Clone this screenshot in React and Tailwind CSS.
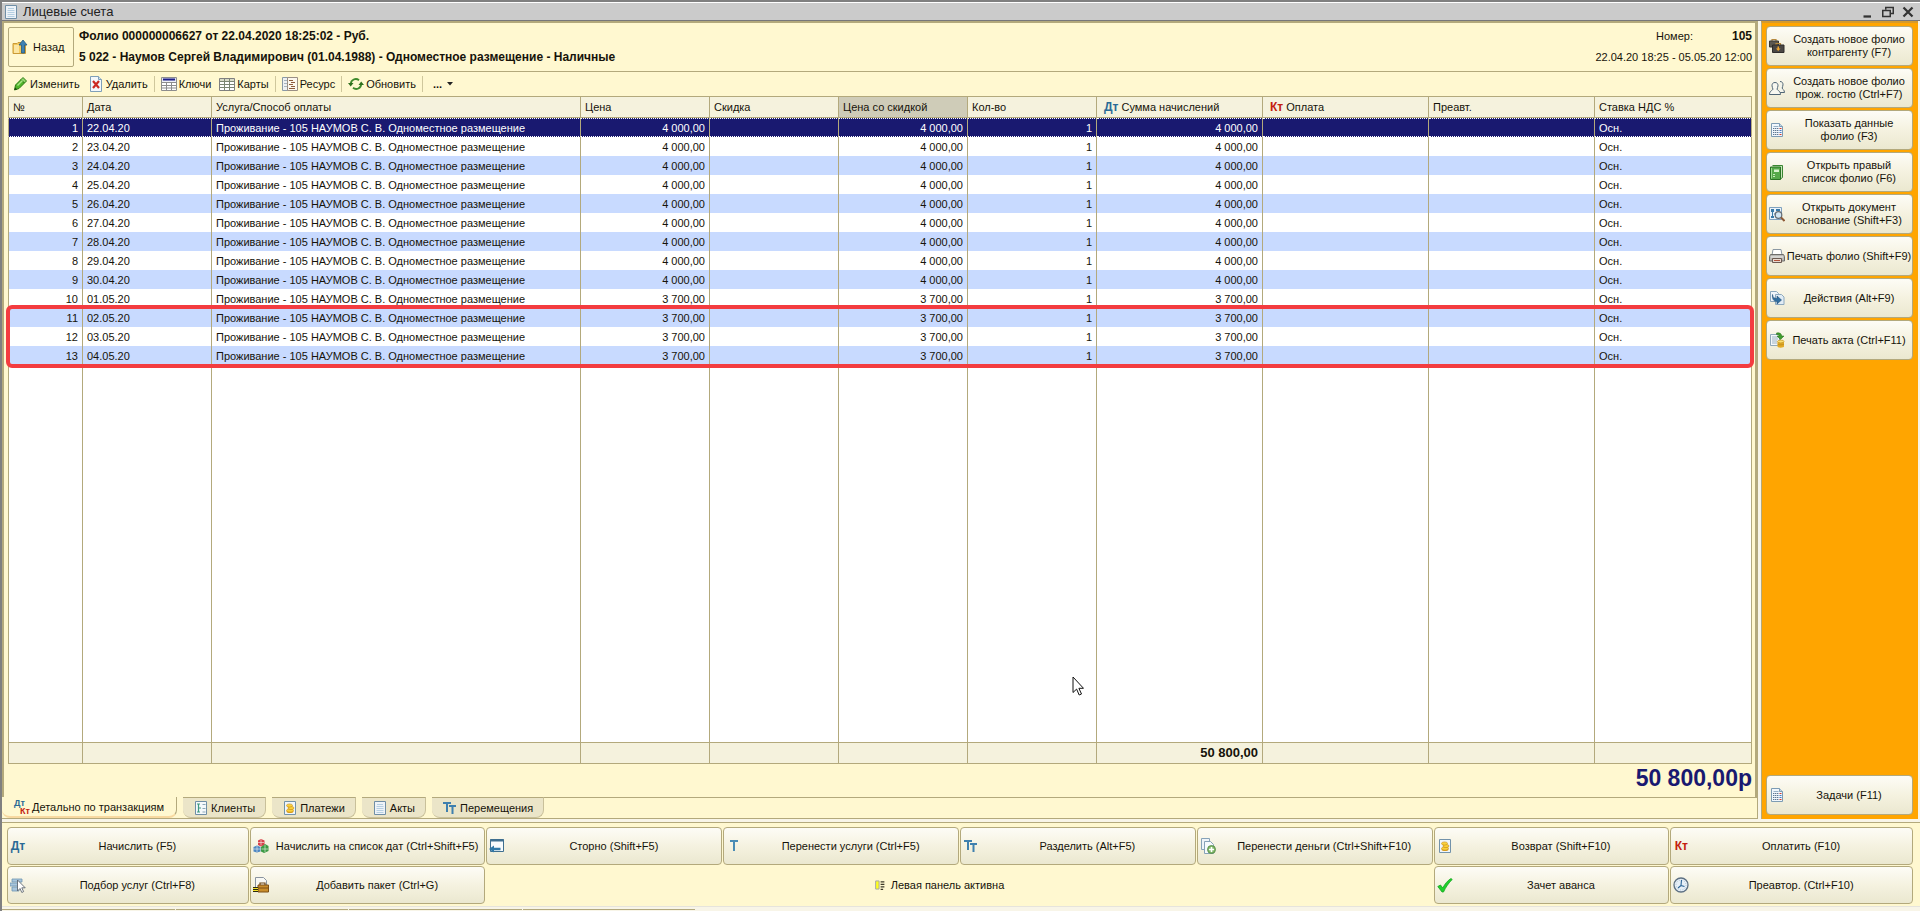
import React, { useState } from 'react';

/* ---------- icons ---------- */

const Icon = ({ children, className = 'w-4 h-4' }) => (
  <svg viewBox="0 0 16 16" className={`${className} shrink-0`} fill="none" aria-hidden="true">
    {children}
  </svg>
);

const SheetIcon = ({ className }) => (
  <Icon className={className}>
    <path d="M2.500 1.500h11v13h-11z" fill="#eef3f8" stroke="#6f8ea6" />
    <path d="M5 4.500h6M4.500 6.500h7M4.500 8.500h7M4.500 10.500h7M4.500 12.500h7" stroke="#b5cfe2" />
  </Icon>
);

const BackIcon = () => (
  <Icon>
    <path d="M1 4.500h4l1-1h3v2h4.500v9H1z" fill="#f3c95c" stroke="#c99a37" />
    <path d="M2 6h5v8H2z" fill="#fbe6a2" />
    <path d="M11 1l4 5h-2.500v8h-3V6H7z" fill="#3e82b4" stroke="#22587f" strokeWidth=".8" />
  </Icon>
);

const PencilIcon = () => (
  <Icon>
    <path d="M2.500 14l1-5L9 3.500l3.500 3.500L7 12.500z" fill="#4fb52b" stroke="#2a7a12" />
    <path d="M9 3.500l2-2L14.500 5l-2 2z" fill="#8fd66b" stroke="#2a7a12" />
    <path d="M5.500 9.500l5-5" stroke="#a9e588" strokeWidth="1.400" />
    <path d="M2.500 14l.6-2.500 2 2z" fill="#1e3d12" />
  </Icon>
);

const DeleteIcon = () => (
  <Icon>
    <path d="M2.500.5h8l3 3v12h-11z" fill="#f4f8fc" stroke="#7f9fb8" />
    <path d="M10.500.5v3h3" stroke="#7f9fb8" fill="#cfe0ee" />
    <path d="M5 5l6 7M11 5l-6 7" stroke="#cc2a22" strokeWidth="2.200" />
  </Icon>
);

const KeysIcon = () => (
  <Icon>
    <path d="M.5 1.500h15v13H.5z" fill="#fff" stroke="#8d8d8d" />
    <path d="M1 2h14v3.500H1z" fill="#dfe3ee" />
    <path d="M2 3.500h12" stroke="#20208a" strokeWidth="2" />
    <path d="M1 6.500h14M1 9.500h14M1 12h14M5.500 6v8.500M10.500 6v8.500" stroke="#8d8d8d" />
  </Icon>
);

const CardsIcon = () => (
  <Icon>
    <path d="M.5 2.500h15v12H.5z" fill="#fff" stroke="#808080" />
    <path d="M1 3h14v2H1z" fill="#d9dbc8" />
    <path d="M1 5.500h14M1 8.500h14M1 11.500h14M5.500 3v11.500M10.500 3v11.500" stroke="#7b8573" />
  </Icon>
);

const ResourceIcon = () => (
  <Icon>
    <path d="M.5 1.500h6v13h-6z" fill="#eef0f2" stroke="#8a99a6" />
    <path d="M2 4.500h3M2 7.500h3M2 10.500h3" stroke="#a8b4bf" />
    <path d="M5.500 1.500h10v13h-10z" fill="#fcf7ee" stroke="#9a8f85" />
    <path d="M7 4.500h4M9 6.500h4M7 8.500h4M9 10.500h4M7 12.500h6" stroke="#8d5a3c" />
  </Icon>
);

const RefreshIcon = () => (
  <Icon>
    <path d="M2.800 8A5 5 0 0 1 11 4.200M13.200 8A5 5 0 0 1 5 11.800" stroke="#3f8a2c" strokeWidth="1.800" />
    <path d="M0 7h5.500L2.700 10.500zM10.500 9H16l-2.800-3.500z" fill="#2f6f1f" />
  </Icon>
);

const ClientsIcon = () => (
  <Icon>
    <path d="M2.500 1.500h11v13h-11z" fill="#f4f8fb" stroke="#6f8ea6" />
    <path d="M4 4h3M5.500 4v8M5.500 8H8M4 12h3" stroke="#3f9a80" strokeWidth="1.200" />
    <path d="M9.500 4.500h3M9.500 8.500h3M9.500 12h3" stroke="#8ba7b8" />
  </Icon>
);

const MoneyIcon = () => (
  <Icon>
    <path d="M2.500 1.500h11v13h-11z" fill="#f0f6fb" stroke="#7292aa" />
    <path d="M4.600 10.500h6.800V12c-1 1.400-5.800 1.400-6.800 0z" fill="#d99c1c" />
    <ellipse cx="8" cy="10.500" rx="3.400" ry="1.700" fill="#f9d13c" stroke="#c98a14" strokeWidth=".6" />
    <ellipse cx="9" cy="8" rx="3" ry="1.600" fill="#f9d13c" stroke="#c98a14" strokeWidth=".6" />
    <ellipse cx="7.500" cy="5.500" rx="3" ry="1.600" fill="#f9d13c" stroke="#c98a14" strokeWidth=".6" />
  </Icon>
);

const BagsIcon = () => (
  <Icon>
    <path d="M3 3V1.500h4V3" stroke="#b5893e" strokeWidth="1.200" />
    <path d="M.5 3h9v6h-9z" fill="#5c5850" stroke="#393733" />
    <path d="M7 7V5.500h4.500V7" stroke="#b5893e" strokeWidth="1.200" />
    <path d="M3.500 7h11.500v7.500H3.500z" fill="#4a4744" stroke="#2e2c2a" />
    <path d="M8.500 8.500h1.500v2h1.500L9.200 13 7 10.500h1.500z" fill="#f0a52c" />
  </Icon>
);

const PeopleIcon = () => (
  <Icon>
    <path d="M11 1.500c2.200 0 3 1.400 3 3.300 0 1.500-.8 2.200-.8 3.200 0 1.400 2.300 1.500 2.300 4.500H11" stroke="#4f6575" fill="#f4f4ea" />
    <path d="M6 2.500c2.200 0 3 1.400 3 3.300 0 1.500-.9 2.200-.9 3.200 0 1.600 3.400 1.500 3.400 5.500H.5c0-4 3.400-3.900 3.400-5.500C3.900 8 3 7.300 3 5.800c0-1.900.8-3.300 3-3.300z" stroke="#4f6575" fill="#f8f8f0" />
  </Icon>
);

const DataSheetIcon = () => (
  <Icon>
    <path d="M2.500 1.500h8l3 3v10h-11z" fill="#f1f7fc" stroke="#7d9cb4" />
    <path d="M10.500 1.500v3h3" fill="#c4d8e8" stroke="#7d9cb4" />
    <path d="M4 6.500h6M4 8.500h6M4 10.500h6M4 12.500h6" stroke="#5f7890" strokeDasharray="1.400 .6" />
    <path d="M10.500 6.500h2M10.500 12.500h2" stroke="#d43a2a" />
    <path d="M10.500 8.500h2M10.500 10.500h2" stroke="#4a79c0" />
    <path d="M4.500 4.500h5" stroke="#9ab2c6" />
  </Icon>
);

const BookIcon = () => (
  <Icon>
    <path d="M3.500 1.500h10v12l-2 1.500" fill="#c9e8bc" stroke="#3a8532" />
    <path d="M1.500 3h10v12.500h-10z" fill="#56a94a" stroke="#2b7425" />
    <path d="M2.500 4v10.500" stroke="#a0dc92" />
    <path d="M5 5.500h5v2.500H5z" fill="#d9f3cf" />
    <path d="M4 10.500h2M4 12.500h2" stroke="#c9ecbd" />
  </Icon>
);

const FindDocIcon = () => (
  <Icon>
    <path d="M.5 1.500h12v12H.5z" fill="#eaf2f9" stroke="#7fa1bf" />
    <path d="M2 3h3v3H2zM7 3h4v2H7zM2 10h3v2H2z" fill="#3a7aa8" />
    <path d="M3.500 6v4M5 8h3" stroke="#3a7aa8" />
    <circle cx="9.500" cy="9" r="3.300" fill="#cfe4f3" fillOpacity=".9" stroke="#646b72" strokeWidth="1.200" />
    <path d="M12 11.500l3.500 3.500" stroke="#8e5a37" strokeWidth="2" />
  </Icon>
);

const PrinterIcon = () => (
  <Icon>
    <path d="M4 1.500h8l1 5.500H3z" fill="#fff" stroke="#8b98a3" />
    <path d="M1.500 6.500h13l1 2v4.500H.5V8.500z" fill="#b9b9b6" stroke="#6e6e6c" />
    <path d="M2 9h12" stroke="#f0f0ee" />
    <path d="M3.500 10.500h9v4h-9z" fill="#e9d9cf" stroke="#6b5b52" />
    <path d="M5 12.500h6" stroke="#b3543a" />
  </Icon>
);

const ActionsIcon = () => (
  <Icon>
    <path d="M1.500 1.500h6l2 2v8h-8z" fill="#eff5fa" stroke="#8ca8bd" />
    <path d="M6.500 4.500h6l2.500 2.500v7.500H6.500z" fill="#e1ecf5" stroke="#8ca8bd" />
    <path d="M3.500 4.500c.5 3 1.500 4 4.500 4V6l4.500 4-4.500 4v-2.500C4.500 11.500 3 9 3.500 4.500z" fill="#2f6ea0" stroke="#1f4f77" strokeWidth=".6" />
  </Icon>
);

const PrintActIcon = () => (
  <Icon>
    <path d="M1.500 2.500h9v11h-9z" fill="#f3f7fa" stroke="#90a8b8" />
    <path d="M3 5h6M3 7h6M3 9h5M3 11h5" stroke="#9db3c2" />
    <path d="M7.500 1c3-.6 5 .4 5.200 3H15l-3.500 3.500L8 4h2c0-1-.8-1.500-2.500-1.500z" fill="#3f9d2e" stroke="#256b19" strokeWidth=".5" />
    <path d="M8.500 9.500h6.500v5c0 1.500-6.500 1.500-6.500 0z" fill="#e2ab26" />
    <ellipse cx="11.700" cy="9.500" rx="3.300" ry="1.400" fill="#fbe071" stroke="#b98315" strokeWidth=".6" />
    <path d="M8.500 12c1 1.200 5.500 1.200 6.500 0" stroke="#b98315" strokeWidth=".7" />
  </Icon>
);

const CubesIcon = () => (
  <Icon>
    <path d="M5 2.500l3-1.500 3.500 1.500v4.500L8 8.500 5 7z" fill="#d8404a" />
    <path d="M.5 9L4 7.500 7.500 9v4.500L4 14.500l-3.500-1z" fill="#4c86c2" />
    <path d="M8 9l4-3 3.500 2v5L11 15l-3-1.500z" fill="#3c9a44" />
    <path d="M8 1.500v6M5 4.500h6M4 8v6M.5 11h7M12 7v7M8.500 11h6.500" stroke="#f3f3ee" strokeWidth=".6" />
  </Icon>
);

const StornoIcon = () => (
  <Icon>
    <path d="M1.500 1.500h13v12h-13z" fill="#f8fbfd" stroke="#3f6f90" />
    <path d="M1 2.500h14" stroke="#3f6f90" strokeWidth="2" />
    <path d="M0 11l5-3.500v2.200h6.500v2.600H5v2.200z" fill="#2f78a8" />
  </Icon>
);

const TransferIcon = () => (
  <Icon>
    <path d="M4 3h8M8 3v10" stroke="#4a8cb5" strokeWidth="2" />
  </Icon>
);

const DoubleTIcon = () => (
  <Icon>
    <path d="M1 3h8M5 3v9" stroke="#3f80ae" strokeWidth="2" />
    <path d="M7 6h7M10.500 6v8" stroke="#3f80ae" strokeWidth="2" />
  </Icon>
);

const MoveMoneyIcon = () => (
  <Icon>
    <path d="M1.500.5h8v11h-8z" fill="#eef4f9" stroke="#86a2b8" />
    <path d="M4.500 3.500h6l3 3v9h-9z" fill="#f6fafd" stroke="#86a2b8" />
    <circle cx="11.500" cy="11.500" r="4" fill="#7fb867" stroke="#4f8540" strokeWidth=".8" />
    <path d="M11.500 9v5M9 11.500h5" stroke="#fff" strokeWidth="1.600" />
  </Icon>
);

const PickIcon = () => (
  <Icon>
    <path d="M2 2h10v3H2zM0 6h9v3H0zM2 10h7v4H2z" fill="#a9c6dc" stroke="#6d94b2" strokeWidth=".8" />
    <path d="M7.500 3v11l2.500-2.500 1.800 4 1.800-.9-1.800-3.800h3.400z" fill="#fff" stroke="#5d6770" strokeWidth=".9" />
  </Icon>
);

const PackageIcon = () => (
  <Icon>
    <path d="M2.500.5h8l3 3v8h-11z" fill="#f8f8f4" stroke="#8a94a0" />
    <path d="M7 8V6h5v2" stroke="#6b4312" strokeWidth="1.200" />
    <path d="M5 8h10.500v7H5z" fill="#c98d2c" stroke="#7d4f14" />
    <path d="M5 11h10" stroke="#7d4f14" />
    <path d="M0 10.500h5M0 12.500h5M0 14.500h5" stroke="#2b2a10" />
    <path d="M0 11.500h5M0 13.500h5" stroke="#f4e02a" />
  </Icon>
);

const CheckIcon = () => (
  <Icon>
    <path d="M.8 9.500L3.500 8l2.300 3C7.500 7.500 10.500 3.500 14 1.500l1.200 1C12 5.500 8.500 10.500 6.500 15H5z" fill="#1fd02c" stroke="#14a51e" strokeWidth=".8" />
  </Icon>
);

const ClockIcon = () => (
  <Icon>
    <circle cx="8" cy="8" r="7" fill="#e6eff7" stroke="#5c6f82" strokeWidth="1.300" />
    <circle cx="8" cy="8" r="5" stroke="#a9bfd2" strokeWidth="1" strokeDasharray="1 1.600" />
    <path d="M8.500 3L8 8.500l3.500 1M8 8.500L5 11" stroke="#2b6496" strokeWidth="1.100" />
  </Icon>
);

const PanelIcon = () => (
  <Icon className="w-[10px] h-[10px]">
    <path d="M1 1.500h5.500v13H1z" fill="#ffff1c" stroke="#a9a9a9" strokeWidth="1.600" />
    <path d="M9 3h6M9 7h6M9 11h6M9 15h4" stroke="#3c3a28" strokeWidth="2" />
  </Icon>
);

const DebitMark = () => <span className="font-bold text-[12px] text-[#2a6a96]">Дт</span>;
const CreditMark = () => <span className="font-bold text-[12px] text-[#c4200e]">Кт</span>;

const DebitCreditIcon = () => (
  <span className="flex flex-col w-4 text-[9px] leading-2 font-bold shrink-0">
    <span className="text-[#2a6a96] self-start">Дт</span>
    <span className="text-[#c4200e] self-end">Кт</span>
  </span>
);

/* ---------- data ---------- */

const columns = [
  { title: '№', width: 'w-[75px]' },
  { title: 'Дата', width: 'w-[129px]' },
  { title: 'Услуга/Способ оплаты', width: 'w-[369px]' },
  { title: 'Цена', width: 'w-[129px]' },
  { title: 'Скидка', width: 'w-[129px]' },
  { title: 'Цена со скидкой', width: 'w-[129px]', active: true },
  { title: 'Кол-во', width: 'w-[129px]' },
  { title: 'Сумма начислений', width: 'w-[166px]', mark: <DebitMark /> },
  { title: 'Оплата', width: 'w-[166px]', mark: <CreditMark /> },
  { title: 'Преавт.', width: 'w-[166px]' },
  { title: 'Ставка НДС %', width: 'w-[157px]' },
];

const service = 'Проживание - 105 НАУМОВ С. В. Одноместное размещение';

const rows = [
  { id: 1, date: '22.04.20', price: '4 000,00' },
  { id: 2, date: '23.04.20', price: '4 000,00' },
  { id: 3, date: '24.04.20', price: '4 000,00' },
  { id: 4, date: '25.04.20', price: '4 000,00' },
  { id: 5, date: '26.04.20', price: '4 000,00' },
  { id: 6, date: '27.04.20', price: '4 000,00' },
  { id: 7, date: '28.04.20', price: '4 000,00' },
  { id: 8, date: '29.04.20', price: '4 000,00' },
  { id: 9, date: '30.04.20', price: '4 000,00' },
  { id: 10, date: '01.05.20', price: '3 700,00' },
  { id: 11, date: '02.05.20', price: '3 700,00' },
  { id: 12, date: '03.05.20', price: '3 700,00' },
  { id: 13, date: '04.05.20', price: '3 700,00' },
];

const toolbar = [
  [
    { label: 'Изменить', icon: <PencilIcon /> },
    { label: 'Удалить', icon: <DeleteIcon /> },
  ],
  [
    { label: 'Ключи', icon: <KeysIcon /> },
    { label: 'Карты', icon: <CardsIcon /> },
  ],
  [{ label: 'Ресурс', icon: <ResourceIcon /> }],
  [{ label: 'Обновить', icon: <RefreshIcon /> }],
];

const tabs = [
  { label: 'Детально по транзакциям', icon: <DebitCreditIcon /> },
  { label: 'Клиенты', icon: <ClientsIcon /> },
  { label: 'Платежи', icon: <MoneyIcon /> },
  { label: 'Акты', icon: <SheetIcon /> },
  { label: 'Перемещения', icon: <DoubleTIcon /> },
];

const sideActions = [
  { label: 'Создать новое фолио\nконтрагенту (F7)', icon: <BagsIcon /> },
  { label: 'Создать новое фолио\nпрож. гостю (Ctrl+F7)', icon: <PeopleIcon /> },
  { label: 'Показать данные\nфолио (F3)', icon: <DataSheetIcon /> },
  { label: 'Открыть правый\nсписок фолио (F6)', icon: <BookIcon /> },
  { label: 'Открыть документ\nоснование (Shift+F3)', icon: <FindDocIcon /> },
  { label: 'Печать фолио (Shift+F9)', icon: <PrinterIcon /> },
  { label: 'Действия (Alt+F9)', icon: <ActionsIcon /> },
  { label: 'Печать акта (Ctrl+F11)', icon: <PrintActIcon /> },
];

/* ---------- pieces ---------- */

const ActionButton = ({ icon, label, height = 'h-[38px]' }) => (
  <button
    type="button"
    className={`${height} w-full min-w-0 flex items-center gap-px pl-[2px] rounded border border-[#b3a97c] bg-linear-to-b from-[#fdfcf6] via-[#f5f2e0] to-[#ebe8d0] hover:to-[#f5f2dd]`}
  >
    <span className="w-4 shrink-0 flex items-center justify-center">{icon}</span>
    <span className="flex-1 text-center leading-[13px] whitespace-pre">{label}</span>
  </button>
);

const cell = 'border-r border-[#b3a97c] px-1 whitespace-nowrap overflow-hidden';

const FolioRow = ({ row, selected, onSelect, children }) => {
  const tone = selected
    ? 'bg-[#191970] text-white'
    : row.id % 2 === 1
      ? 'bg-[#c8daff]'
      : 'bg-white';
  const line = selected ? 'border-y border-y-white [border-block-style:dotted]' : '';
  return (
    <tr className={`h-[19px] ${tone}`} onClick={onSelect}>
      <td className={`border-r border-l border-[#b3a97c] px-1 text-right ${line}`}>
        {row.id}
        {children}
      </td>
      <td className={`${cell} ${line}`}>{row.date}</td>
      <td className={`${cell} ${line}`}>{service}</td>
      <td className={`${cell} ${line} text-right`}>{row.price}</td>
      <td className={`${cell} ${line}`}></td>
      <td className={`${cell} ${line} text-right`}>{row.price}</td>
      <td className={`${cell} ${line} text-right`}>1</td>
      <td className={`${cell} ${line} text-right`}>{row.price}</td>
      <td className={`${cell} ${line}`}></td>
      <td className={`${cell} ${line}`}></td>
      <td className={`${cell} ${line}`}>Осн.</td>
    </tr>
  );
};

const FolioTable = () => {
  const [selected, setSelected] = useState(1);

  return (
    <table className="w-full h-full table-fixed border-separate border-spacing-0 border-t border-[#b3a97c]">
      <thead>
        <tr className="h-[21px] bg-[#f5f2dd]">
          {columns.map((col, index) => (
            <th
              key={col.title}
              className={`${col.width} ${index === 0 ? 'border-l' : ''} ${col.active ? 'bg-[#cfccb8]' : ''} border-r border-b border-[#b3a97c] px-1 text-left font-normal whitespace-nowrap`}
            >
              {col.mark ? <span className="px-[3px]">{col.mark}</span> : null}
              {col.title}
            </th>
          ))}
        </tr>
      </thead>
      <tbody>
        {rows.slice(0, 10).map((row) => (
          <FolioRow key={row.id} row={row} selected={selected === row.id} onSelect={() => setSelected(row.id)} />
        ))}
      </tbody>
      {/* Последние три ночи обведены рамкой */}
      <tbody className="relative">
        {rows.slice(10).map((row, index) => (
          <FolioRow key={row.id} row={row} selected={selected === row.id} onSelect={() => setSelected(row.id)}>
            {index === 0 && (
              <span className="absolute -inset-x-[2px] -inset-y-[3px] border-4 border-[#f33c40] rounded-md pointer-events-none"></span>
            )}
          </FolioRow>
        ))}
      </tbody>
      <tbody className="h-full">
        <tr className="h-full bg-white">
          {columns.map((col, index) => (
            <td key={col.title} className={`${index === 0 ? 'border-l' : ''} border-r border-[#b3a97c]`}></td>
          ))}
        </tr>
      </tbody>
      <tfoot>
        <tr className="h-[22px] bg-[#f5f2dd]">
          {columns.map((col, index) => (
            <td
              key={col.title}
              className={`${index === 0 ? 'border-l' : ''} border-y border-r border-[#b3a97c] px-1 text-right text-[13px] font-bold`}
            >
              {index === 7 ? '50 800,00' : ''}
            </td>
          ))}
        </tr>
      </tfoot>
    </table>
  );
};

const TitleBar = () => (
  <header className="h-[19px] shrink-0 flex items-center pl-px pr-[6px] bg-[#cbcbcb] border-t border-b border-t-white border-b-[#77777a] text-[13px] text-[#222]">
    <SheetIcon />
    <h1 className="flex-1 pl-1">Лицевые счета</h1>
    <div className="flex items-center gap-2">
      <button type="button" aria-label="Свернуть">
        <Icon className="w-3 h-3"><path d="M2 14h10" stroke="#333" strokeWidth="3" /></Icon>
      </button>
      <button type="button" aria-label="Восстановить">
        <Icon className="w-3 h-3">
          <path d="M5 5V2h10v8h-4" stroke="#333" strokeWidth="2" />
          <path d="M1 6h10v8H1z" stroke="#333" strokeWidth="2" />
        </Icon>
      </button>
      <button type="button" aria-label="Закрыть">
        <Icon className="w-3 h-3"><path d="M2 2l12 12M14 2L2 14" stroke="#333" strokeWidth="3" /></Icon>
      </button>
    </div>
  </header>
);

const App = () => {
  const [activeTab, setActiveTab] = useState(0);

  return (
    <div className="h-screen flex flex-col bg-[#f8f5e8] border-t-2 border-l-2 border-[#808080] font-['Liberation_Sans',Arial,sans-serif] text-[11px] leading-4 text-[#16130a] overflow-hidden">
      <TitleBar />

      <div className="flex-1 min-h-0 flex gap-[3px] pr-[2px]">
        <main className="flex-1 min-w-0 flex flex-col bg-[#fff8d0] border-b border-r border-[#b3a97c]">
          <section className="flex-1 min-h-0 flex flex-col border-t-2 border-l-2 border-r-2 border-[#b3a97c] pl-1 pr-[3px]">
            <div className="flex items-center h-11 my-[2px] shrink-0">
              <button type="button" className="w-[66px] h-10 flex items-center gap-1 pl-[3px] border border-[#b3a97c] rounded-xs bg-[#fff8d0]">
                <BackIcon />
                <span className="pl-px">Назад</span>
              </button>
              <div className="flex-1 pl-[5px] text-[12px] font-bold leading-[21px]">
                <p>Фолио 000000006627 от 22.04.2020 18:25:02 - Руб.</p>
                <p>5 022 - Наумов Сергей Владимирович (01.04.1988) - Одноместное размещение - Наличные</p>
              </div>
              <div className="text-right leading-[21px]">
                <p>
                  Номер: <b className="inline-block w-14 text-[12px]">105</b>
                </p>
                <p>22.04.20 18:25 - 05.05.20 12:00</p>
              </div>
            </div>

            <div className="flex items-center h-[25px] shrink-0 border-t border-[#b3a97c] pl-1">
              {toolbar.map((group) => (
                <div key={group[0].label} className="flex items-center gap-2 pr-[6px] mr-[6px] border-r border-[#cfc79c]">
                  {group.map((item) => (
                    <button key={item.label} type="button" className="flex items-center gap-[2px]">
                      {item.icon}
                      {item.label}
                    </button>
                  ))}
                </div>
              ))}
              <button type="button" className="flex items-center gap-1 pl-1" aria-label="Ещё">
                <span className="font-bold">...</span>
                <Icon className="w-2 h-2"><path d="M2 4h12L8 11z" fill="#222" /></Icon>
              </button>
            </div>

            <div className="relative flex-1 min-h-0">
              <FolioTable />
              <svg viewBox="0 0 12 20" className="absolute left-[61%] bottom-[68px] w-3 h-5" aria-hidden="true">
                <path d="M1 1v15.500l3.600-3.400 2.600 5.900 2.300-1-2.600-5.700h4.600z" fill="#fff" stroke="#111" />
              </svg>
            </div>

            <p className="h-[33px] shrink-0 text-right text-[23px] leading-7 font-bold text-[#191970]">50 800,00р</p>
          </section>

          <div className="flex h-[21px] shrink-0" role="tablist">
            {tabs.map((tab, index) => (
              <button
                key={tab.label}
                type="button"
                role="tab"
                aria-selected={activeTab === index}
                onClick={() => setActiveTab(index)}
                className={`flex items-center gap-[2px] whitespace-nowrap rounded-b-lg border-r border-b ${
                  activeTab === index
                    ? 'px-3 bg-[#fff8d0] border-[#b3a97c] border-b-2 border-b-[#f8d9a0]'
                    : 'px-[10px] ml-[6px] bg-[#ebe5c8] border-[#c9c09a] border-t border-t-[#b3a97c]'
                }`}
              >
                {tab.icon}
                {tab.label}
              </button>
            ))}
            <div className="flex-1 border-t border-[#b3a97c]"></div>
          </div>
        </main>

        <aside className="w-[157px] shrink-0 flex flex-col gap-[2px] bg-[#ffa500] border-t-2 border-[#b3a97c] border-t-[#d59a2c] border-l pl-1 pr-[5px] pt-[3px] pb-1">
          {sideActions.map((action) => (
            <ActionButton key={action.label} {...action} height="h-10" />
          ))}
          <div className="mt-auto">
            <ActionButton label="Задачи (F11)" icon={<DataSheetIcon />} height="h-10" />
          </div>
        </aside>
      </div>

      <footer className="shrink-0 mt-[3px] border-t border-[#b3a97c] bg-[#fff8d0] pl-[5px] pr-[7px] pt-1 pb-[2px]">
        <div className="grid grid-cols-[242fr_236fr_236fr_236fr_236fr_236fr_236fr_243fr] gap-px">
          <ActionButton label="Начислить (F5)" icon={<DebitMark />} />
          <ActionButton label="Начислить на список дат (Ctrl+Shift+F5)" icon={<CubesIcon />} />
          <ActionButton label="Сторно (Shift+F5)" icon={<StornoIcon />} />
          <ActionButton label="Перенести услуги (Ctrl+F5)" icon={<TransferIcon />} />
          <ActionButton label="Разделить (Alt+F5)" icon={<DoubleTIcon />} />
          <ActionButton label="Перенести деньги (Ctrl+Shift+F10)" icon={<MoveMoneyIcon />} />
          <ActionButton label="Возврат (Shift+F10)" icon={<MoneyIcon />} />
          <ActionButton label="Оплатить (F10)" icon={<CreditMark />} />
          <ActionButton label="Подбор услуг (Ctrl+F8)" icon={<PickIcon />} />
          <ActionButton label="Добавить пакет (Ctrl+G)" icon={<PackageIcon />} />
          <button type="button" className="col-span-4 flex items-center justify-center gap-[6px] pr-10">
            <PanelIcon />
            Левая панель активна
          </button>
          <ActionButton label="Зачет аванса" icon={<CheckIcon />} />
          <ActionButton label="Преавтор. (Ctrl+F10)" icon={<ClockIcon />} />
        </div>
      </footer>

      <div className="h-[5px] shrink-0 flex items-end gap-px pb-px border-t border-[#e6e4dc]">
        <span className="w-[9%] h-px bg-[#b3a97c]"></span>
        <span className="w-[9%] h-px bg-[#b3a97c]"></span>
        <span className="w-[9%] h-px bg-[#b3a97c]"></span>
        <span className="w-[9%] h-px bg-[#b3a97c]"></span>
      </div>
    </div>
  );
};

export default App;
